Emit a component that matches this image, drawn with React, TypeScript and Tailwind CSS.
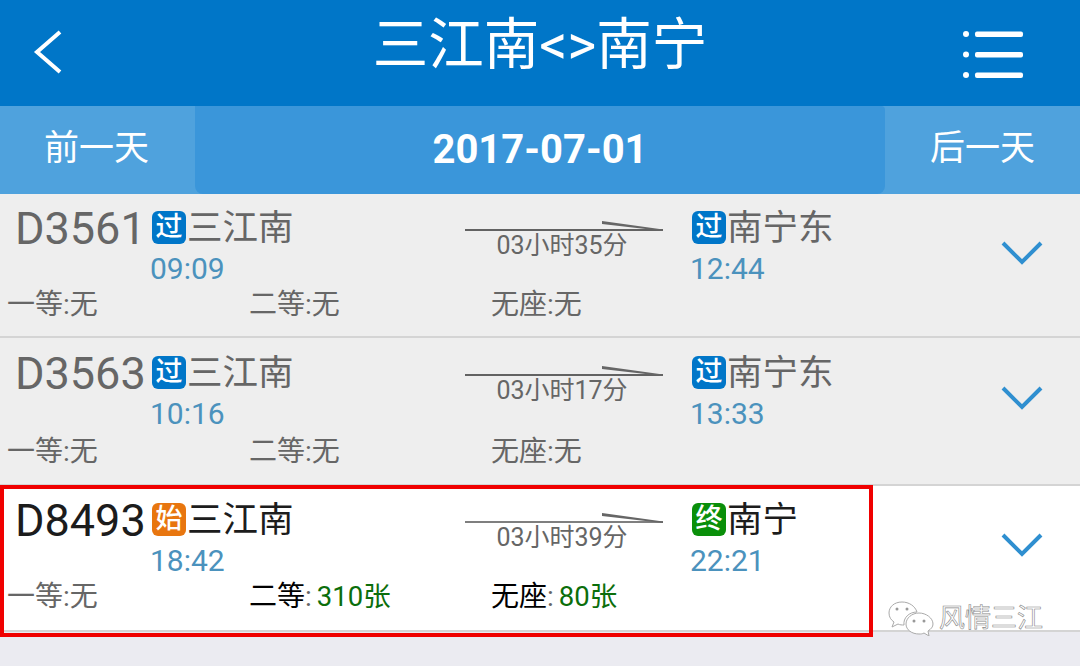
const FONT = "font-['Roboto','Noto_Sans_CJK_SC',sans-serif]";

type Seat = { label: string; value: string; open?: boolean };
type Train = {
  no: string;
  fromBadge: string;
  fromBadgeClass: string;
  from: string;
  dep: string;
  duration: string;
  toBadge: string;
  toBadgeClass: string;
  to: string;
  arr: string;
  seats: Seat[];
  active?: boolean;
  rowClass: string;
  seatClass: string;
};

const trains: Train[] = [
  {
    no: "D3561", fromBadge: "过", fromBadgeClass: "bg-[#0076c8]", from: "三江南", dep: "09:09",
    duration: "03小时35分", toBadge: "过", toBadgeClass: "bg-[#0076c8]", to: "南宁东", arr: "12:44",
    seats: [{ label: "一等", value: "无" }, { label: "二等", value: "无" }, { label: "无座", value: "无" }],
    rowClass: "h-[144px] bg-[#eeeeee]",
    seatClass: "mt-[1px]",
  },
  {
    no: "D3563", fromBadge: "过", fromBadgeClass: "bg-[#0076c8]", from: "三江南", dep: "10:16",
    duration: "03小时17分", toBadge: "过", toBadgeClass: "bg-[#0076c8]", to: "南宁东", arr: "13:33",
    seats: [{ label: "一等", value: "无" }, { label: "二等", value: "无" }, { label: "无座", value: "无" }],
    rowClass: "h-[148px] bg-[#eeeeee] pt-[1px]",
    seatClass: "mt-[3px]",
  },
  {
    no: "D8493", fromBadge: "始", fromBadgeClass: "bg-[#e8760f]", from: "三江南", dep: "18:42",
    duration: "03小时39分", toBadge: "终", toBadgeClass: "bg-[#0a8f0a]", to: "南宁", arr: "22:21",
    seats: [{ label: "一等", value: "无" }, { label: "二等", value: "310张", open: true }, { label: "无座", value: "80张", open: true }],
    active: true,
    rowClass: "h-[146px] bg-white",
    seatClass: "mt-[1px]",
  },
];

function Row({ t }: { t: Train }) {
  const main = t.active ? "text-[#1c1c1c]" : "text-[#666666]";
  return (
    <div className={`${t.rowClass} flex border-b-2 border-[#d4d4d4]`}>
      <div className="w-[872px] flex flex-col">
        <div className="flex h-[92px]">
          <div className={`w-[152px] pl-[15px] pt-[8px] text-[45px] leading-[54px] ${main}`}>{t.no}</div>
          <div className="w-[313px] pt-[12px]">
            <div className="flex items-center h-[45px]">
              <span className={`${t.fromBadgeClass} w-[34px] h-[33px] mt-[-3px] rounded-md flex items-center justify-center text-white text-[27px] font-medium leading-none`}>{t.fromBadge}</span>
              <span className={`ml-[1px] text-[35.5px] leading-[45px] ${main}`}>{t.from}</span>
            </div>
            <div className="text-[30px] leading-[34px] text-[#4b92bd] mt-[1px] ml-[-2px]">{t.dep}</div>
          </div>
          <div className="w-[227px] pt-[24px]">
            <svg width="200" height="14" viewBox="0 0 200 14" className="block">
              <path d="M0 12H198" stroke={t.active ? "#555" : "#333"} strokeWidth="1.6" fill="none" />
              <polygon points="137,3 198,11.5 198,13 137,6" fill="#666" />
            </svg>
            <div className="w-[194px] text-center text-[25px] leading-[30px] text-[#666666] mt-[-1px]">{t.duration}</div>
          </div>
          <div className="pt-[12px]">
            <div className="flex items-center h-[45px]">
              <span className={`${t.toBadgeClass} w-[34px] h-[33px] mt-[-3px] rounded-md flex items-center justify-center text-white text-[27px] font-medium leading-none`}>{t.toBadge}</span>
              <span className={`ml-[1px] text-[35.5px] leading-[45px] ${main}`}>{t.to}</span>
            </div>
            <div className="text-[30px] leading-[34px] text-[#4b92bd] mt-[1px] ml-[-2px]">{t.arr}</div>
          </div>
        </div>
        <div className={`flex pl-[7px] text-[28px] leading-[36px] ${t.seatClass}`}>
          {t.seats.map((s) => (
            <div key={s.label} className="w-[242px]">
              <span className={s.open ? "text-black" : "text-[#666666]"}>{s.label}</span>
              <span className="text-[#666666]">:</span>
              {s.open ? (
                <span className="text-[#0b6e0b] text-[27.5px] ml-[5px]">{s.value}</span>
              ) : (
                <span className="text-[#666666]">{s.value}</span>
              )}
            </div>
          ))}
        </div>
      </div>
      <div className="flex-1 flex justify-end pr-[36px] pt-[46px]">
        <svg width="44" height="26" viewBox="0 0 44 26" className="block">
          <path d="M3 3L22 22L41 3" stroke="#2f8fd0" strokeWidth="4" fill="none" />
        </svg>
      </div>
    </div>
  );
}

export default function App() {
  return (
    <div className={`${FONT} relative w-[1080px] h-[666px] overflow-hidden bg-[#ebebf1]`}>
      <header className="h-[106px] bg-[#0076c8] flex items-center justify-between text-white">
        <svg width="100" height="106" viewBox="0 0 100 106" className="block">
          <path d="M60 32L37 52L60 72" stroke="white" strokeWidth="4" fill="none" />
        </svg>
        <div className="text-[55.5px] leading-[70px] mt-[-14px] ml-[20px]">三江南&lt;&gt;南宁</div>
        <svg width="100" height="106" viewBox="0 0 100 106" className="block mr-[20px]">
          <g fill="white">
            <circle cx="6" cy="34" r="3" />
            <circle cx="6" cy="54.5" r="3" />
            <circle cx="6" cy="75" r="3" />
            <rect x="15" y="31.5" width="48" height="5.5" rx="2" />
            <rect x="15" y="52" width="48" height="5.5" rx="2" />
            <rect x="15" y="72.5" width="48" height="5.5" rx="2" />
          </g>
        </svg>
      </header>
      <div className="h-[88px] bg-[#4fa2dd] flex text-white">
        <div className="w-[195px] flex items-center justify-center text-[35px] pb-[2px] pr-[2px]">前一天</div>
        <div className="w-[690px] bg-[#3a96da] rounded-b-lg rounded-tr-sm flex items-center justify-center text-[40px] font-bold">2017-07-01</div>
        <div className="flex-1 flex items-center justify-center text-[35px] pb-[2px]">后一天</div>
      </div>
      <div>
        {trains.map((t) => (
          <Row key={t.no} t={t} />
        ))}
      </div>
      <div className="absolute left-0 top-[485px] w-[873px] h-[152px] border-[4px] border-[#f00000] pointer-events-none" />
      <div className="absolute left-[887px] top-[600px] flex items-center">
        <svg width="50" height="36" viewBox="0 0 50 36" className="block">
          <path d="M15 2C7 2 2 7 2 13C2 17 4 20 7 22L5 27L11 24C13 25 15 25 17 25C16 18 22 12 30 12C28 6 22 2 15 2Z" fill="white" stroke="#aaaaaa" strokeWidth="1" />
          <path d="M32 13C25 13 19 18 19 24C19 30 25 34 32 34C34 34 35 34 37 33L42 36L41 31C44 29 46 27 46 24C46 18 39 13 32 13Z" fill="white" stroke="#aaaaaa" strokeWidth="1" />
          <circle cx="10" cy="9" r="1.5" fill="#999" />
          <circle cx="20" cy="9" r="1.5" fill="#999" />
          <circle cx="27" cy="21" r="1.5" fill="#999" />
          <circle cx="37" cy="21" r="1.5" fill="#999" />
        </svg>
        <span className="ml-[2px] text-[26px] leading-[34px] text-white [-webkit-text-stroke:0.6px_#888888]">风情三江</span>
      </div>
    </div>
  );
}
